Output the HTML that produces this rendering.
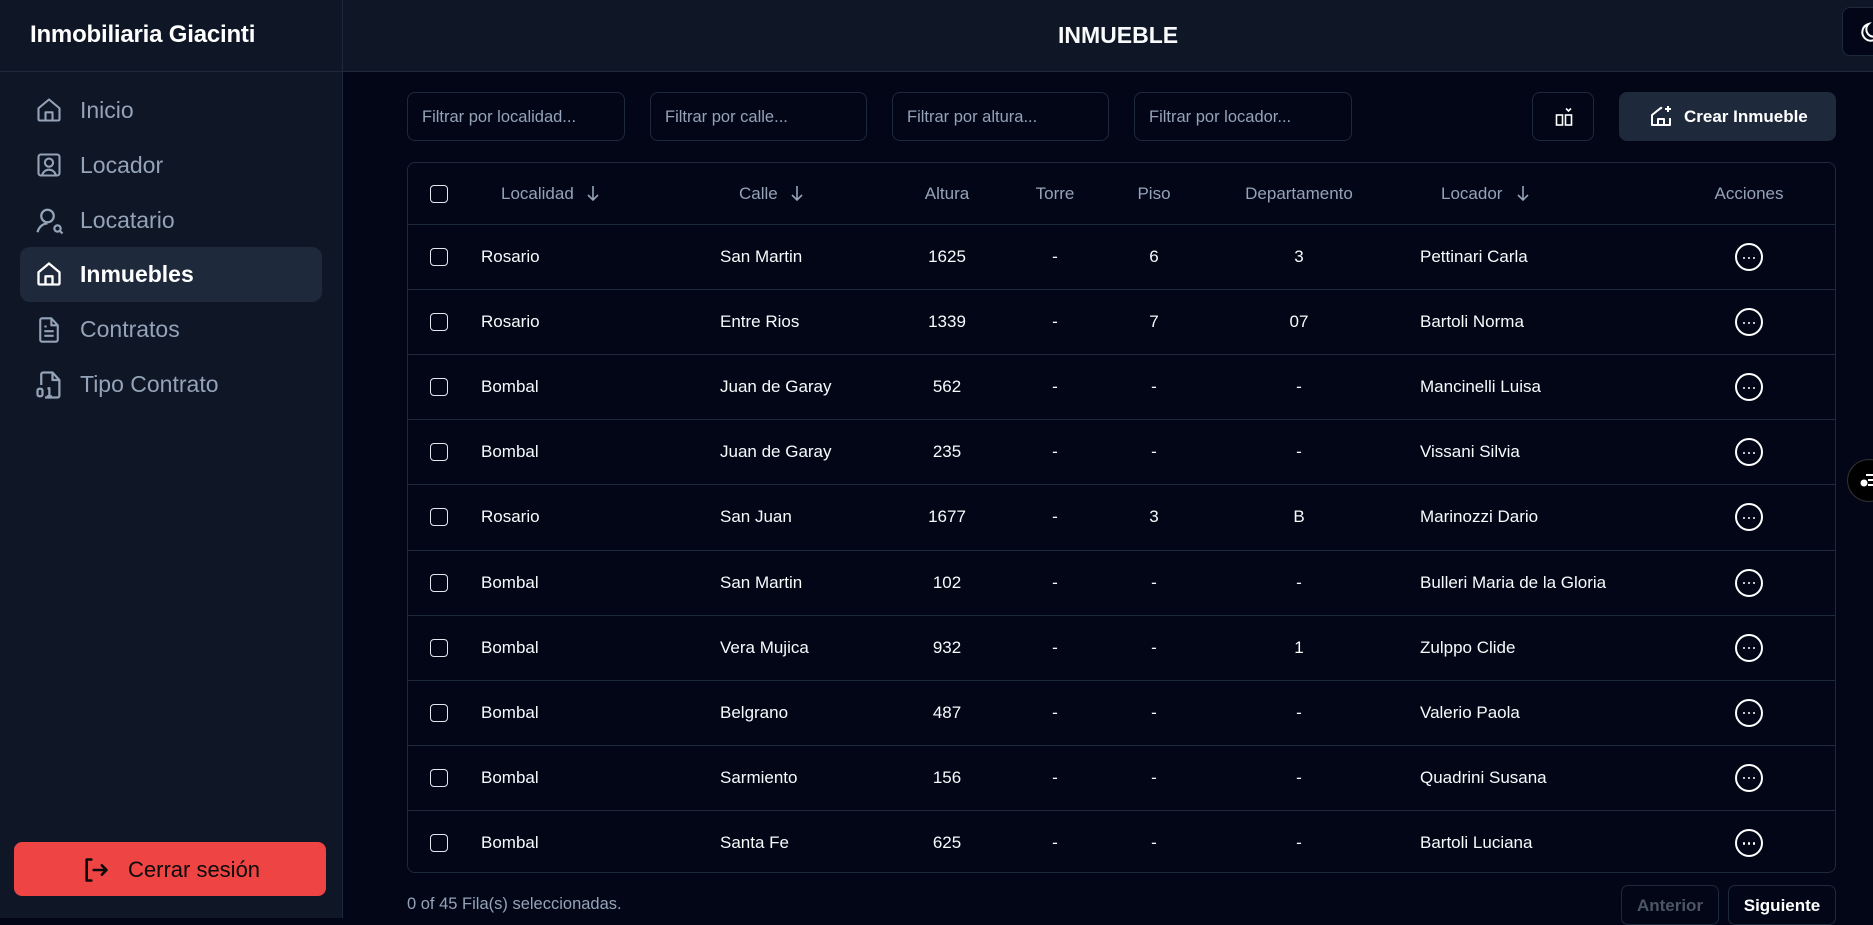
<!DOCTYPE html>
<html><head><meta charset="utf-8"><style>
*{box-sizing:border-box;margin:0;padding:0}
body{width:1873px;height:918px;overflow:hidden;background:#020617;font-family:"Liberation Sans",sans-serif;color:#f8fafc;position:relative}
.side{position:absolute;left:0;top:0;width:343px;height:918px;background:#0f1626;border-right:1px solid #1e293b}
.brand{position:absolute;left:30px;top:21px;font-size:24px;font-weight:bold;color:#fff;letter-spacing:-0.2px}
.sline{position:absolute;left:0;top:71px;width:343px;height:1px;background:#1e293b}
.nav{position:absolute;left:20px;width:302px;height:55px;border-radius:10px;display:flex;align-items:center;color:#94a3b8;font-size:23px}
.nav svg{position:absolute;left:15px;top:13px}
.nav span{position:absolute;left:60px}
.nav.act{background:#1e293b;color:#fff;font-weight:bold}
.logout{position:absolute;left:14px;top:842px;width:312px;height:54px;background:#ef4444;border-radius:8px;color:#0b0b0b;font-size:22px}
.logout svg{position:absolute;left:68px;top:14px}
.logout span{position:absolute;left:114px;top:15px}
.head{position:absolute;left:343px;top:0;width:1530px;height:72px;background:#0f1626;border-bottom:1px solid #1e293b}
.title{position:absolute;left:1058px;top:22px;font-size:23px;font-weight:bold}
.moon{position:absolute;left:1842px;top:7px;width:60px;height:49px;border:1px solid #1e293b;border-radius:8px;background:#020617}
.inp{position:absolute;top:92px;height:49px;border:1px solid #1e293b;border-radius:8px;font-size:16.5px;color:#94a3b8;padding:15px 0 0 14px}
.colbtn{position:absolute;left:1532px;top:92px;width:62px;height:49px;border:1px solid #1e293b;border-radius:8px}
.crear{position:absolute;left:1619px;top:92px;width:217px;height:49px;background:#1e293b;border-radius:8px;font-size:17px;font-weight:bold;color:#fff}
.tbl{position:absolute;left:407px;top:162px;width:1429px;height:711px;border:1px solid #1e293b;border-radius:8px}
.row{position:absolute;left:0;width:1427px;height:65px;border-top:1px solid #1e293b}
.c{position:absolute;top:50%;transform:translateY(-50%);font-size:17px;white-space:nowrap}
.ctr{transform:translate(-50%,-50%)}
.hd{color:#94a3b8;font-size:17px}
.ar{display:inline-block;vertical-align:middle;margin-left:12px;margin-top:-3px}
.cb{position:absolute;left:22px;top:50%;margin-top:-9px;width:18px;height:18px;border:1.5px solid #e2e8f0;border-radius:4px}
.dots{position:absolute;left:1327px;top:50%;margin-top:-14px;width:28px;height:28px;border:2px solid #fff;border-radius:50%}
.dots i{position:absolute;top:11.5px;width:2.2px;height:2.2px;background:#fff;border-radius:50%}
.foot{position:absolute;left:407px;top:895px;font-size:16.5px;color:#94a3b8}
.pb{position:absolute;top:885px;height:40px;border:1px solid #1e293b;border-radius:7px;font-size:17px;font-weight:bold;text-align:center;padding-top:10px}
</style></head><body>
<div class="side">
<div class="brand">Inmobiliaria Giacinti</div>
<div class="sline"></div>
<div class="nav" style="top:83px"><svg width="28" height="28" viewBox="0 0 24 24" fill="none" stroke="#94a3b8" stroke-width="1.8" stroke-linejoin="round"><path d="M3 10.5L12 3l9 7.5V20a1 1 0 0 1-1 1H4a1 1 0 0 1-1-1z"/><path d="M9 21v-7h6v7"/></svg><span>Inicio</span></div>
<div class="nav" style="top:138px"><svg width="28" height="28" viewBox="0 0 24 24" fill="none" stroke="#94a3b8" stroke-width="1.8"><rect x="3" y="3" width="18" height="18" rx="2"/><circle cx="12" cy="10" r="3.5"/><path d="M6 21c1-3.5 3.5-5 6-5s5 1.5 6 5"/></svg><span>Locador</span></div>
<div class="nav" style="top:193px"><svg width="30" height="30" viewBox="0 0 24 24" fill="none" stroke="#94a3b8" stroke-width="1.8"><circle cx="10" cy="8" r="5"/><path d="M2 21c1-4 4-7 8-7"/><circle cx="18" cy="18" r="2.5"/><path d="M20 20l2 2"/></svg><span>Locatario</span></div>
<div class="nav act" style="top:247px"><svg width="28" height="28" viewBox="0 0 24 24" fill="none" stroke="#fff" stroke-width="2" stroke-linejoin="round"><path d="M3 10.5L12 3l9 7.5V20a1 1 0 0 1-1 1H4a1 1 0 0 1-1-1z"/><path d="M9 21v-7h6v7"/></svg><span>Inmuebles</span></div>
<div class="nav" style="top:302px"><svg width="28" height="30" viewBox="0 0 24 24" fill="none" stroke="#94a3b8" stroke-width="1.8" stroke-linejoin="round"><path d="M14 2H6a1.5 1.5 0 0 0-1.5 1.5v17A1.5 1.5 0 0 0 6 22h12a1.5 1.5 0 0 0 1.5-1.5V8z"/><path d="M14 2v6h5.5M8 9h2M8 13h8M8 17h8"/></svg><span>Contratos</span></div>
<div class="nav" style="top:357px"><svg width="30" height="30" viewBox="0 0 24 24" fill="none" stroke="#94a3b8" stroke-width="1.8" stroke-linejoin="round"><path d="M5 12V3.5A1.5 1.5 0 0 1 6.5 2H14l5.5 6v12.5A1.5 1.5 0 0 1 18 22H8"/><path d="M14 2v6h5.5"/><rect x="2" y="15" width="4" height="6" rx="1.5"/><path d="M10 15l1.5-.5V21M9.5 21h4"/></svg><span>Tipo Contrato</span></div>
<div class="logout"><svg width="28" height="28" viewBox="0 0 24 24" fill="none" stroke="#0b0b0b" stroke-width="2.2" stroke-linecap="round" stroke-linejoin="round"><path d="M8 3H4v18h4"/><path d="M10 12h11M17 8l4 4-4 4"/></svg><span>Cerrar sesión</span></div>
</div>
<div class="head"></div>
<div class="title">INMUEBLE</div>
<div class="moon"><svg style="position:absolute;left:16px;top:12px" width="24" height="24" viewBox="0 0 24 24" fill="none" stroke="#fff" stroke-width="2"><path d="M20 14.5A8.5 8.5 0 1 1 9.5 4a7 7 0 0 0 10.5 10.5z"/></svg></div>
<div class="inp" style="left:407px;width:218px">Filtrar por localidad...</div>
<div class="inp" style="left:650px;width:217px">Filtrar por calle...</div>
<div class="inp" style="left:892px;width:217px">Filtrar por altura...</div>
<div class="inp" style="left:1134px;width:218px">Filtrar por locador...</div>
<div class="colbtn"><svg style="position:absolute;left:22px;top:14px" width="18" height="20" viewBox="0 0 18 20" fill="none" stroke="#fff" stroke-width="1.6"><rect x="1.5" y="8" width="6" height="10"/><rect x="10.5" y="8" width="6" height="10"/><path d="M11 1.5l2.5 2.5L16 1.5"/></svg></div>
<div class="crear"><svg style="position:absolute;left:30px;top:12px" width="24" height="24" viewBox="0 0 24 24" fill="none" stroke="#fff" stroke-width="2" stroke-linejoin="round"><path d="M13 4.5L12 3.8 3 11v10h18v-7"/><path d="M9 21v-6h6v6M19 2v6M16 5h6"/></svg><span style="position:absolute;left:65px;top:15px">Crear Inmueble</span></div>
<div class="tbl">
<div class="row" style="top:0;border-top:none;height:61px">
<div class="cb"></div>
<div class="c hd" style="left:93px">Localidad<svg class="ar" width="14" height="16" viewBox="0 0 14 16" fill="none" stroke="#94a3b8" stroke-width="1.6"><path d="M7 1v14M2 10l5 5 5-5"/></svg></div>
<div class="c hd" style="left:331px">Calle<svg class="ar" width="14" height="16" viewBox="0 0 14 16" fill="none" stroke="#94a3b8" stroke-width="1.6"><path d="M7 1v14M2 10l5 5 5-5"/></svg></div>
<div class="c hd ctr" style="left:539px">Altura</div>
<div class="c hd ctr" style="left:647px">Torre</div>
<div class="c hd ctr" style="left:746px">Piso</div>
<div class="c hd ctr" style="left:891px">Departamento</div>
<div class="c hd" style="left:1033px">Locador<svg class="ar" style="margin-left:14px" width="14" height="16" viewBox="0 0 14 16" fill="none" stroke="#94a3b8" stroke-width="1.6"><path d="M7 1v14M2 10l5 5 5-5"/></svg></div>
<div class="c hd ctr" style="left:1341px">Acciones</div>
</div>
<div id="rows"></div>
</div>
<div class="foot">0 of 45 Fila(s) seleccionadas.</div>
<div class="pb" style="left:1621px;width:98px;color:#4b5563">Anterior</div>
<div class="pb" style="left:1728px;width:108px;color:#fff">Siguiente</div>
<div style="position:absolute;left:1847px;top:459px;width:44px;height:43px;border-radius:50%;background:#000;border:1px solid #333"><svg style="position:absolute;left:12px;top:12px" width="20" height="18" viewBox="0 0 20 18" fill="#fff"><rect x="6" y="2" width="14" height="2"/><rect x="8" y="7" width="12" height="2"/><rect x="8" y="12" width="12" height="2"/><circle cx="4" cy="11" r="3.5"/></svg></div>
<script>
var d=[["Rosario","San Martin","1625","-","6","3","Pettinari Carla"],["Rosario","Entre Rios","1339","-","7","07","Bartoli Norma"],["Bombal","Juan de Garay","562","-","-","-","Mancinelli Luisa"],["Bombal","Juan de Garay","235","-","-","-","Vissani Silvia"],["Rosario","San Juan","1677","-","3","B","Marinozzi Dario"],["Bombal","San Martin","102","-","-","-","Bulleri Maria de la Gloria"],["Bombal","Vera Mujica","932","-","-","1","Zulppo Clide"],["Bombal","Belgrano","487","-","-","-","Valerio Paola"],["Bombal","Sarmiento","156","-","-","-","Quadrini Susana"],["Bombal","Santa Fe","625","-","-","-","Bartoli Luciana"]];
var h="";d.forEach(function(r,i){h+='<div class="row" style="top:'+(61+i*65.1)+'px"><div class="cb"></div><div class="c" style="left:73px">'+r[0]+'</div><div class="c" style="left:312px">'+r[1]+'</div><div class="c ctr" style="left:539px">'+r[2]+'</div><div class="c ctr" style="left:647px">'+r[3]+'</div><div class="c ctr" style="left:746px">'+r[4]+'</div><div class="c ctr" style="left:891px">'+r[5]+'</div><div class="c" style="left:1012px">'+r[6]+'</div><div class="dots"><i style="left:6px"></i><i style="left:11px"></i><i style="left:16px"></i></div></div>';});
document.getElementById("rows").innerHTML=h;
</script>
</body></html>
